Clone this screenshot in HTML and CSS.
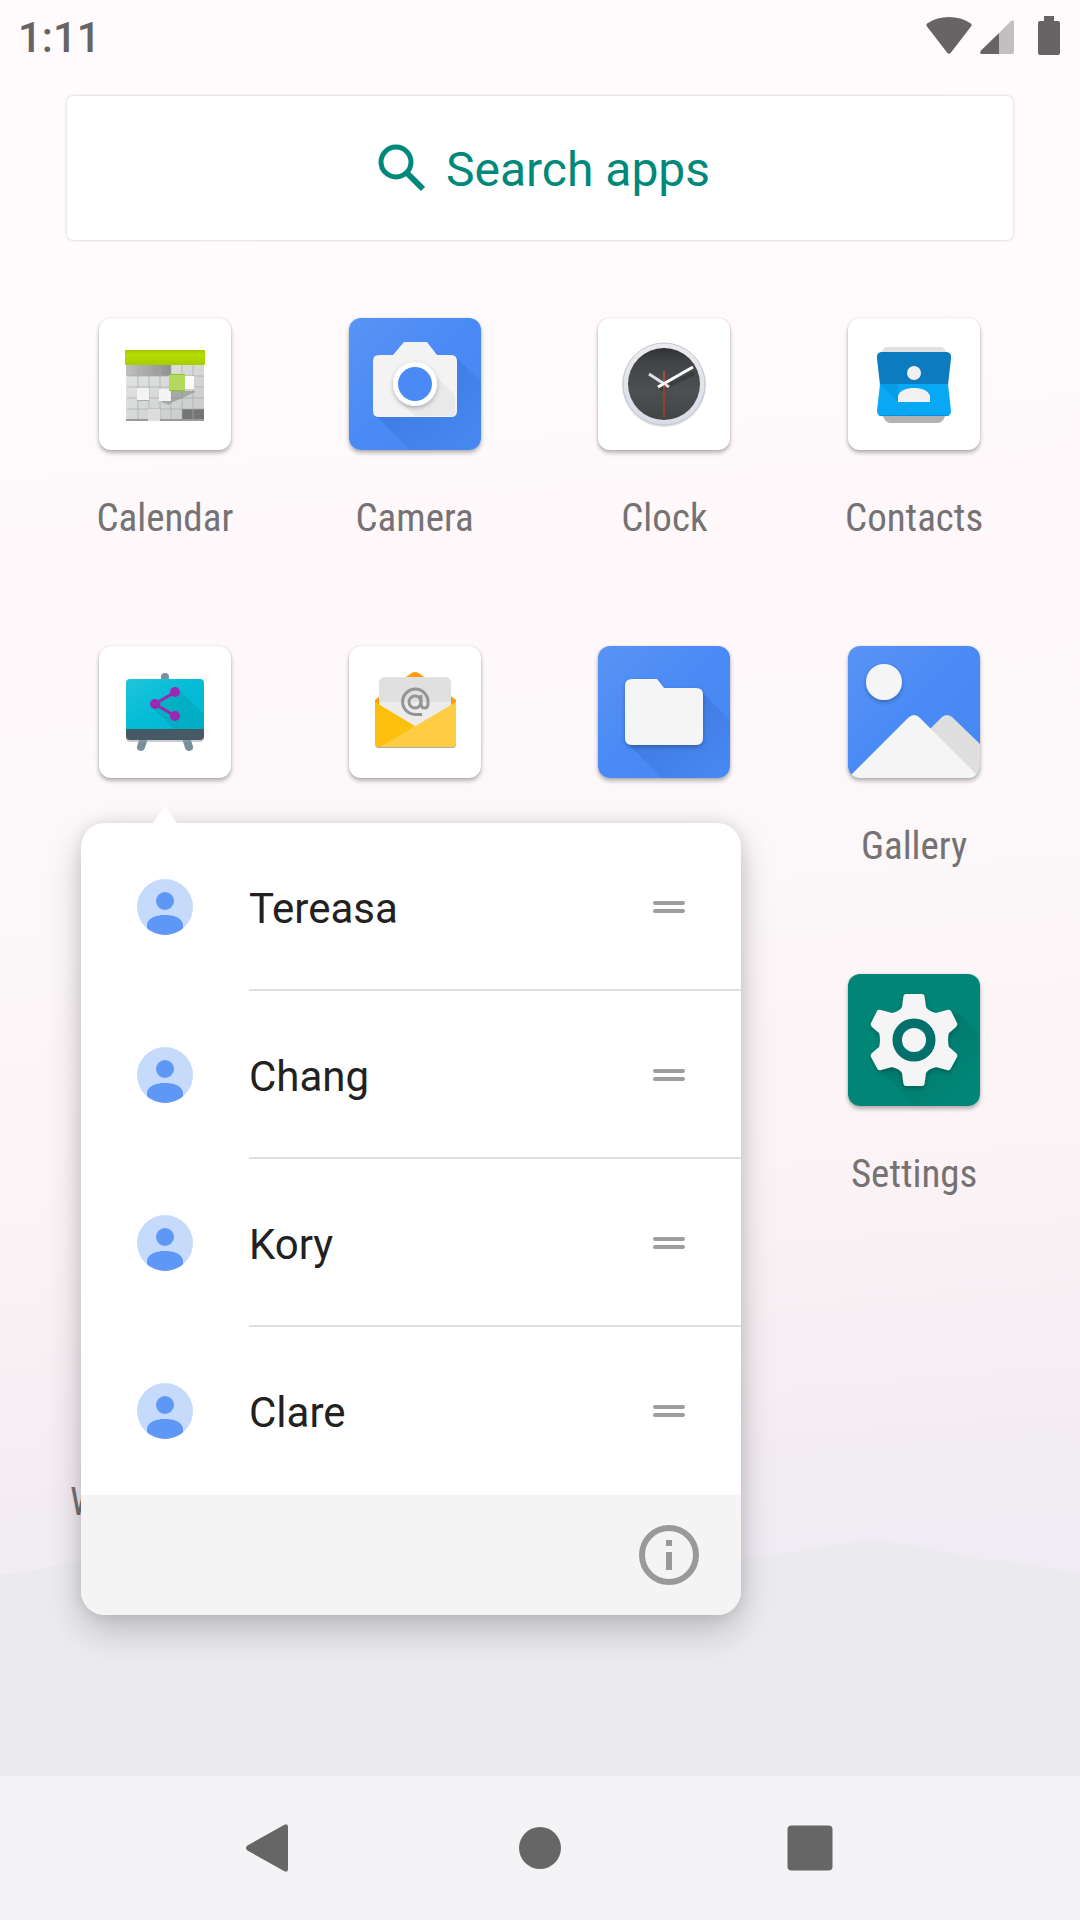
FILE: index.html
```html
<!DOCTYPE html>
<html lang="en">
<head>
<meta charset="utf-8">
<meta name="viewport" content="width=device-width, initial-scale=1">
<title>Apps</title>
<link rel="stylesheet" href="styles.css">
</head>
<body>
<div class="screen">
  <svg class="wallpaper" viewBox="0 0 1080 1920" preserveAspectRatio="none" aria-hidden="true">
    <defs>
      <linearGradient id="sky" gradientUnits="userSpaceOnUse" x1="463" y1="0" x2="617" y2="1920">
        <stop offset="0" stop-color="#fffbfc"/>
        <stop offset=".3" stop-color="#fef8fa"/>
        <stop offset=".48" stop-color="#fcf7f9"/>
        <stop offset=".58" stop-color="#fcf4f7"/>
        <stop offset=".64" stop-color="#fbf2f6"/>
        <stop offset=".7" stop-color="#f8eff4"/>
        <stop offset=".76" stop-color="#f3edf3"/>
        <stop offset=".82" stop-color="#f1ecf3"/>
      </linearGradient>
      <linearGradient id="hill" x1="0" y1="0" x2="0" y2="1">
        <stop offset="0" stop-color="#ebebef"/>
        <stop offset="1" stop-color="#edebf0"/>
      </linearGradient>
    </defs>
    <rect width="1080" height="1920" fill="url(#sky)"/>
    <path fill="url(#hill)" d="M0 1575Q40 1570 81 1560Q300 1500 560 1580Q660 1572 760 1556Q800 1551 845 1543Q890 1540 920 1547Q945 1551 970 1558Q1030 1562 1080 1575V1920H0Z"/>
  </svg>

  <header class="status">
    <time class="status-time">1:11</time>
    <div class="status-icons">
      <svg width="46" height="38" viewBox="0 0 46 38"><path fill="#666465" d="M1 9.500Q-.5 7.500 1.500 6.200Q11 0 23 0T44.500 6.200Q46.500 7.500 45 9.500L25 35.500Q23 38 21 35.500Z"/></svg>
      <svg width="34" height="38" viewBox="0 0 34 38"><path fill="#c3bfc0" d="M19 16L31 4Q34 2 34 5V35Q34 37 32 37H19Z"/><path fill="#666465" d="M19 16V37H2Q-1 37 1 33.500Z"/></svg>
      <svg class="battery" width="22" height="40" viewBox="0 0 22 40"><path fill="#666465" d="M6 0H16V5H20Q22 5 22 7V37Q22 39 20 39H2Q0 39 0 37V7Q0 5 2 5H6Z"/></svg>
    </div>
  </header>

  <main class="drawer">
    <button class="search" type="button">
      <svg width="48" height="48" viewBox="0 0 48 48" fill="none" stroke="#00897b"><circle cx="18" cy="18" r="15" stroke-width="5"/><path d="M29.500 29.500L45 45" stroke-width="6"/></svg>
      <span>Search apps</span>
    </button>

    <div class="grid">
      <a class="app" href="#calendar">
        <svg class="icon" viewBox="0 0 132 132">
          <defs>
            <linearGradient id="calTop" x1="0" y1="0" x2="0" y2="1"><stop offset="0" stop-color="#a4c900"/><stop offset=".3" stop-color="#b5dc00"/><stop offset="1" stop-color="#a8ce00"/></linearGradient>
            <linearGradient id="calBody" x1="0" y1="0" x2="1" y2="1"><stop offset="0" stop-color="#e6e7e7"/><stop offset="1" stop-color="#c6c8c8"/></linearGradient>
            <linearGradient id="calDark" x1="0" y1="0" x2="1" y2="0"><stop offset="0" stop-color="#c0c0c0"/><stop offset="1" stop-color="#8f8f8f"/></linearGradient>
          </defs>
          <rect x="27" y="46" width="78" height="57" rx="2" fill="url(#calBody)"/>
          <rect x="27" y="47" width="45" height="11" fill="url(#calDark)"/>
          <path fill="#747675" d="M83 91H105V102H83Z"/>
          <path stroke="#a9abab" stroke-width="1" opacity=".7" fill="none" d="M39 47V102M50 47V102M61 47V102M72 47V102M83 47V102M94 47V102M28 58H105M28 69H105M28 80H105M28 91H105"/>
          <path fill="#666" opacity=".4" d="M72 73H96V74L88 78L72 85L70 87L62 84Z"/>
          <rect x="27" y="101" width="78" height="2" fill="#999b9b"/>
          <rect x="26" y="32" width="80" height="15" rx="1" fill="url(#calTop)"/>
          <rect x="38" y="70" width="12" height="12" fill="#f3f3f3"/>
          <rect x="38" y="82" width="12" height="1" fill="#aaa"/>
          <rect x="60" y="71" width="12" height="12" fill="#f4f4f4"/>
          <rect x="85" y="58" width="10" height="13" fill="#fafafa"/>
          <rect x="49" y="91" width="12" height="12" fill="#dcdcdc"/>
          <rect x="70" y="56" width="16" height="17" fill="#b4d95f"/>
          <path stroke="#94c31d" d="M70 56.500H86M70 72.500H86"/>
        </svg>
        <span class="label">Calendar</span>
      </a>
      <a class="app" href="#camera">
        <svg class="icon" viewBox="0 0 132 132">
          <defs>
            <linearGradient id="blue" x1="0" y1="0" x2="1" y2="1"><stop offset="0" stop-color="#5894f5"/><stop offset=".5" stop-color="#4a8af5"/><stop offset="1" stop-color="#4687f0"/></linearGradient>
            <linearGradient id="cast" x1="0" y1="0" x2="1" y2="1"><stop offset=".3" stop-color="#1f4fa8" stop-opacity=".26"/><stop offset=".9" stop-color="#1f4fa8" stop-opacity="0"/></linearGradient>
            <filter id="soft" x="-20%" y="-20%" width="140%" height="150%"><feDropShadow dx="0" dy="2" stdDeviation="2" flood-color="#000" flood-opacity=".28"/></filter>
          </defs>
          <rect width="132" height="132" fill="url(#blue)"/>
          <path fill="url(#cast)" d="M26 97L61 132H132V64L107 39Z"/>
          <path fill="#f3f3f3" d="M30 37H44L55 24H78L88 37H102Q108 37 108 43V93Q108 99 102 99H30Q24 99 24 93V43Q24 37 30 37Z"/>
          <path fill="#000" opacity=".04" d="M86 57L106 77V98H66L51 84Z"/>
          <g filter="url(#soft)"><circle cx="66" cy="66" r="22" fill="#fff"/></g>
          <circle cx="66" cy="66" r="17" fill="#4a8af5"/>
        </svg>
        <span class="label">Camera</span>
      </a>
      <a class="app" href="#clock">
        <svg class="icon" viewBox="0 0 132 132">
          <defs>
            <linearGradient id="rim" x1="0" y1="0" x2="0" y2="1"><stop offset="0" stop-color="#ececec"/><stop offset="1" stop-color="#d9dbe9"/></linearGradient>
            <linearGradient id="face" x1="0" y1="0" x2="0" y2="1"><stop offset="0" stop-color="#2e3033"/><stop offset=".2" stop-color="#424446"/><stop offset=".6" stop-color="#4d5052"/><stop offset="1" stop-color="#424446"/></linearGradient>
          </defs>
          <circle cx="66" cy="67" r="42" fill="#bbb" opacity=".5"/>
          <circle cx="66" cy="66" r="41" fill="url(#rim)" stroke="#c6c8d4" stroke-width="1"/>
          <circle cx="66" cy="66" r="36" fill="url(#face)"/>
          <path d="M62 72L96 55" stroke="#222" stroke-width="4" opacity=".35"/>
          <path d="M66 53V66" stroke="#a94b3d" stroke-width="2"/>
          <path d="M51 56L71 69" stroke="#dfe0ec" stroke-width="3"/>
          <path d="M66 66V99" stroke="#93402f" stroke-width="2"/>
          <path d="M60 69L95 49" stroke="#fff" stroke-width="3"/>
        </svg>
        <span class="label">Clock</span>
      </a>
      <a class="app" href="#contacts">
        <svg class="icon" viewBox="0 0 132 132">
          <path fill="#e0e2e0" d="M38 29H94Q97 30 99 36H33Q35 30 38 29Z"/>
          <path fill="#b2b2b2" d="M34 97H98L95 102Q93 105 89 105H43Q39 105 37 102Z"/>
          <path fill="#0c7cc0" d="M33 34H99Q104 35 103 41L100 67H32L29 41Q28 35 33 34Z"/>
          <path fill="#08a8f5" d="M32 66H100L103 93Q103 98 98 98H34Q29 98 29 93Z"/>
          <path fill="#0a86cc" opacity=".35" d="M32 66H50V84L64 98L63 98Z"/>
          <path fill="#0277bd" opacity=".5" d="M31 97H101V98H31Z"/>
          <circle cx="66" cy="55" r="7" fill="#f1f1f1"/>
          <path fill="#f1f1f1" d="M50 84V78C52 72 59 70 66 70S80 72 82 78V84Z"/>
        </svg>
        <span class="label">Contacts</span>
      </a>

      <a class="app" href="#custom" aria-label="Sharing board">
        <svg class="icon" viewBox="0 0 132 132">
          <defs><linearGradient id="teal" x1="0" y1="0" x2="1" y2="1"><stop offset="0" stop-color="#20c4dc"/><stop offset=".5" stop-color="#04bcd6"/><stop offset="1" stop-color="#00b8d4"/></linearGradient></defs>
          <path stroke="#78909c" stroke-width="8" stroke-linecap="round" d="M66 31V36M45 92L42 101M87 92L90 101"/>
          <rect x="27" y="37" width="78" height="59" rx="4" fill="#999" opacity=".5"/>
          <path fill="url(#teal)" d="M31 33H101Q105 33 105 37V84H27V37Q27 33 31 33Z"/>
          <path fill="#0097a7" opacity=".35" d="M80 44L105 68V84H76L52 61Z"/>
          <path fill="#455a64" d="M27 83H105V90Q105 94 101 94H31Q27 94 27 90Z"/>
          <path stroke="#9c27b0" stroke-width="3" fill="none" d="M76 46L56 58L76 70"/>
          <g fill="#9c27b0"><circle cx="76" cy="46" r="5"/><circle cx="56" cy="58" r="5"/><circle cx="76" cy="70" r="5"/></g>
        </svg>
      </a>
      <a class="app" href="#email" aria-label="Email">
        <svg class="icon" viewBox="0 0 132 132">
          <path fill="#ff9d0f" d="M26 60V54L31 50L61 28Q66 24 71 28L102 50L107 54V60Z"/>
          <path fill="#aaa" d="M26 90H107V98Q107 102 103 102H30Q26 102 26 98Z"/>
          <path fill="#e0e0e0" d="M35 31H97Q102 32 102 37V70L66 85L30 70V37Q30 32 35 31Z"/>
          <path fill="#ececec" d="M30 56H102V70L66 84L30 70Z"/>
          <path fill="#fec00e" d="M26 56L66 80L60 101H30Q26 101 26 97Z"/>
          <path fill="#fecd44" d="M107 56V97Q107 101 103 101H31Z"/>
          <g fill="none" stroke="#959595" stroke-width="3"><circle cx="66" cy="56" r="6"/><path d="M73 68.500H66A12.700 12.700 0 1 1 79 56V58Q79 62 75.500 62T72 58V49"/></g>
        </svg>
      </a>
      <a class="app" href="#files" aria-label="Files">
        <svg class="icon" viewBox="0 0 132 132">
          <rect width="132" height="132" fill="url(#blue)"/>
          <path fill="url(#cast)" d="M29 97L64 132H132V74L104 46Z"/>
          <path filter="url(#soft)" fill="#f5f5f5" d="M34 33H59L66 42H98Q105 42 105 49V92Q105 99 98 99H34Q27 99 27 92V40Q27 33 34 33Z"/>
        </svg>
      </a>
      <a class="app" href="#gallery">
        <svg class="icon" viewBox="0 0 132 132">
          <rect width="132" height="132" fill="url(#blue)"/>
          <circle filter="url(#soft)" cx="36" cy="36" r="18" fill="#f5f5f5"/>
          <path fill="#dfdfdf" d="M82 83L94 71Q99 67 104 71L132 98V132H110Z"/>
          <path fill="#f5f5f5" d="M3 129L60 72Q66 66 72 72L129 129V132H3Z"/>
        </svg>
        <span class="label">Gallery</span>
      </a>

      <a class="app app-last-column" href="#settings">
        <svg class="icon" viewBox="0 0 132 132">
          <defs><linearGradient id="gearCast" x1="0" y1="0" x2="1" y2="1"><stop offset=".3" stop-color="#00605c" stop-opacity=".35"/><stop offset=".8" stop-color="#00605c" stop-opacity="0"/></linearGradient></defs>
          <rect width="132" height="132" fill="#018576"/>
          <path fill="url(#gearCast)" d="M110 38L132 62V132H68L30 94Z"/>
          <path filter="url(#soft)" fill="#f5f5f5" fill-rule="evenodd" d="M58 20H74Q76 20 76.500 22L78 33Q80 37 88 39L99 36Q102 35 103 37L109 49Q110 51 108 53L101 59Q100 61 100 66T101 73L108 79Q110 81 109 83L103 94Q102 97 99 96L88 93Q80 95 78 99L76.500 110Q76 112 74 112H58Q56 112 55.500 110L54 99Q52 95 44 93L33 96Q30 97 29 94L23 83Q22 81 24 79L31 73Q32 71 32 66T31 59L24 53Q22 51 23 49L29 37Q30 35 33 36L44 39Q52 37 54 33L55.500 22Q56 20 58 20ZM66 45A21 21 0 1 0 66 87A21 21 0 1 0 66 45Z"/>
          <circle cx="66" cy="66" r="17" fill="none" stroke="#04706e" stroke-width="9"/>
          <circle cx="66" cy="66" r="12" fill="#f5f5f5"/>
        </svg>
        <span class="label">Settings</span>
      </a>

      <a class="app app-wide-label" href="#w">
        <svg class="icon" viewBox="0 0 132 132" aria-hidden="true"></svg>
        <span class="label">W</span>
      </a>
    </div>

    <section class="popup" aria-label="Shortcuts">
      <svg class="popup-arrow" width="24" height="16" viewBox="0 0 24 16"><path fill="#fff" d="M0 16L10 1.500Q12 -1 14 1.500L24 16Z"/></svg>
      <ul class="shortcuts">
        <li class="shortcut">
          <svg class="avatar" viewBox="0 0 56 56"><use href="#person"/></svg>
          <button class="shortcut-name" type="button"><span>Tereasa</span><svg width="32" height="12" viewBox="0 0 32 12"><use href="#handle"/></svg></button>
        </li>
        <li class="shortcut">
          <svg class="avatar" viewBox="0 0 56 56"><use href="#person"/></svg>
          <button class="shortcut-name" type="button"><span>Chang</span><svg width="32" height="12" viewBox="0 0 32 12"><use href="#handle"/></svg></button>
        </li>
        <li class="shortcut">
          <svg class="avatar" viewBox="0 0 56 56"><use href="#person"/></svg>
          <button class="shortcut-name" type="button"><span>Kory</span><svg width="32" height="12" viewBox="0 0 32 12"><use href="#handle"/></svg></button>
        </li>
        <li class="shortcut">
          <svg class="avatar" viewBox="0 0 56 56"><use href="#person"/></svg>
          <button class="shortcut-name" type="button"><span>Clare</span><svg width="32" height="12" viewBox="0 0 32 12"><use href="#handle"/></svg></button>
        </li>
      </ul>
      <footer class="popup-footer">
        <button class="info" type="button" aria-label="App info">
          <svg width="60" height="60" viewBox="0 0 60 60"><circle cx="30" cy="30" r="27" fill="none" stroke="#999" stroke-width="6"/><path fill="#999" d="M27 15H33V21H27ZM27 27H33V45H27Z"/></svg>
        </button>
      </footer>
    </section>
  </main>

  <nav class="navbar" aria-label="System">
    <button type="button" aria-label="Back"><svg width="48" height="48" viewBox="0 0 48 48"><path fill="#666" d="M1.500 21.500L38 1Q42 -1 42 3V45Q42 49 38 47L1.500 26.500Q-1.500 24 1.500 21.500Z"/></svg></button>
    <button type="button" aria-label="Home"><svg width="48" height="48" viewBox="0 0 48 48"><circle cx="24" cy="24" r="21" fill="#666"/></svg></button>
    <button type="button" aria-label="Overview"><svg width="48" height="48" viewBox="0 0 48 48"><rect x="1.500" y="1.500" width="45" height="45" rx="4" fill="#666"/></svg></button>
  </nav>
</div>

<svg class="sprites" aria-hidden="true">
  <defs>
    <clipPath id="disc"><circle cx="28" cy="28" r="28"/></clipPath>
    <g id="person" clip-path="url(#disc)"><rect width="56" height="56" fill="#c6dafc"/><g fill="#5e97f6"><circle cx="28" cy="22" r="9"/><path d="M10 56V45C12 38 20 36 28 36S44 38 46 45V56Z"/></g></g>
    <g id="handle" fill="#9e9e9e"><rect width="32" height="4" rx="2"/><rect y="8" width="32" height="4" rx="2"/></g>
  </defs>
</svg>
</body>
</html>
```
FILE: styles.css
```css
* { box-sizing: border-box; }

body {
  margin: 0;
  font-family: Roboto, "Liberation Sans", sans-serif;
  background: #edebf0;
}

button {
  margin: 0;
  padding: 0;
  border: 0;
  background: none;
  font: inherit;
  color: inherit;
}

svg { display: block; flex: none; }

.sprites { position: absolute; width: 0; height: 0; }

.screen {
  position: relative;
  display: flex;
  flex-direction: column;
  min-height: 100vh;
}

.wallpaper {
  position: absolute;
  inset: 0;
  z-index: -1;
  width: 100%;
  height: 100%;
}

.status {
  display: flex;
  align-items: center;
  justify-content: space-between;
  height: 72px;
  padding: 0 20px 0 18px;
}

.status-time {
  padding-top: 4px;
  font-size: 42px;
  font-weight: 500;
  line-height: 68px;
  color: #666465;
}

.status-icons { display: flex; align-items: center; gap: 8px; }
.battery { margin-left: 16px; }

.drawer {
  position: relative;
  flex: 1;
  padding: 24px 40px 0;
}

.search {
  display: flex;
  align-items: center;
  justify-content: center;
  gap: 20px;
  width: calc(100% - 54px);
  height: 144px;
  margin: 0 27px;
  padding-left: 8px;
  border-radius: 6px;
  background: #fff;
  box-shadow: 0 0 3px rgba(0, 0, 0, .22);
  font-size: 48px;
  color: #00897b;
}

.search span { padding-top: 2px; }

.grid {
  display: grid;
  grid-template-columns: repeat(4, 1fr);
  grid-auto-rows: 328px;
  margin: 78px 1px 0 0;
}

.app {
  display: flex;
  flex-direction: column;
  align-items: center;
  gap: 45px;
  color: #757274;
  text-decoration: none;
}

.app-last-column { grid-column: 4; }
.app-wide-label { grid-column: 1; }
.app-wide-label .label { align-self: flex-start; margin-left: 30px; }

.icon {
  width: 132px;
  height: 132px;
  border-radius: 12px;
  background: #fff;
  box-shadow: 0 3px 4px rgba(0, 0, 0, .28), 0 0 2px rgba(0, 0, 0, .14);
}

.label {
  font-family: "Roboto Condensed", "Liberation Sans Narrow", Roboto, sans-serif;
  font-size: 39px;
  line-height: 46px;
}

/* Shortcut menu, floating over the grid */
.popup {
  position: absolute;
  top: 751px;
  left: 81px;
  width: 660px;
  border-radius: 24px;
  background: #fff;
  box-shadow: 0 16px 36px rgba(0, 0, 0, .2), 0 0 16px rgba(0, 0, 0, .1);
}

.popup-arrow { position: absolute; left: 72px; bottom: 100%; }

.shortcuts { margin: 0; padding: 0; list-style: none; }

.shortcut {
  display: flex;
  align-items: center;
  gap: 56px;
  height: 168px;
  padding-left: 56px;
}

.avatar { width: 56px; height: 56px; }

.shortcut-name {
  display: flex;
  flex: 1;
  align-items: center;
  justify-content: space-between;
  height: 168px;
  padding-right: 56px;
  font-size: 42px;
  color: #212121;
}

.shortcut-name span { padding-top: 2px; }

.shortcut:not(:last-child) .shortcut-name {
  border-bottom: 2px solid #e0e0e0;
  padding-top: 2px;
}

.popup-footer {
  display: flex;
  align-items: center;
  justify-content: flex-end;
  height: 120px;
  padding-right: 42px;
  border-radius: 0 0 24px 24px;
  background: #f4f4f4;
}

.navbar {
  display: flex;
  align-items: center;
  height: 144px;
  padding: 0 135px;
  background: rgba(255, 255, 255, .4);
}

.navbar button {
  display: flex;
  flex: 1;
  justify-content: center;
}
```
